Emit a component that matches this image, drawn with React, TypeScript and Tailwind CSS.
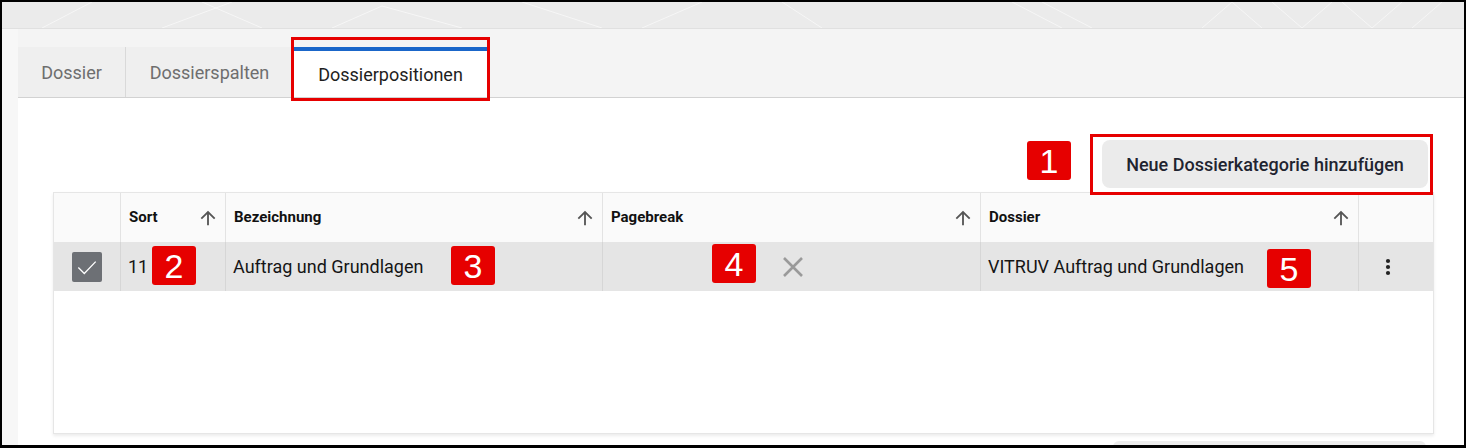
import React from "react";

const Label = ({ n, className }: { n: string; className: string }) => (
  <div
    className={`absolute z-10 flex h-[39px] w-[44px] items-center justify-center rounded-[3px] bg-[#e60000] font-['Liberation_Sans',Arial,sans-serif] text-[34px] leading-none text-white ${className}`}
  >
    {n}
  </div>
);

const ArrowUp = () => (
  <svg width="22" height="22" viewBox="0 0 24 24" className="shrink-0">
    <path
      d="M4 12l1.41 1.41L11 7.83V20h2V7.83l5.58 5.59L20 12l-8-8-8 8z"
      fill="#555555"
    />
  </svg>
);

const HeaderCell = ({ title, border = true }: { title?: string; border?: boolean }) => (
  <div
    className={`flex h-full items-center justify-between pl-[8px] pr-[6px] ${border ? "border-l border-[#e3e3e3]" : ""}`}
  >
    {title ? (
      <>
        <span className="text-[15px] font-bold text-[#111]">{title}</span>
        <ArrowUp />
      </>
    ) : null}
  </div>
);

export default function App() {
  return (
    <div className="flex h-[448px] w-[1466px] flex-col overflow-hidden border-2 border-b-[3px] border-black bg-white font-['Roboto',sans-serif]">
      {/* top band */}
      <div className="relative h-[27px] shrink-0 overflow-hidden border-b border-[#e0e0e0] bg-[#ebebeb]">
        <svg width="1462" height="26" className="absolute left-0 top-0" fill="none">
          <g stroke="#ffffff" strokeOpacity="0.55" strokeWidth="1">
            <path d="M40 26 L90 0 M160 26 L230 0 M200 0 L260 26 M330 26 L380 4 L460 26" />
            <path d="M520 0 L600 26 M640 26 L700 0 M780 0 L820 26" />
            <path d="M1010 0 L1060 26 M1040 0 L1090 26 M1200 26 L1230 0 L1260 26 M1270 0 L1300 26" />
            <path d="M1300 26 L1330 0 M1340 0 L1370 26 L1400 0 M1410 26 L1440 0" />
          </g>
        </svg>
      </div>

      <div className="flex min-h-0 flex-1">
        {/* left strip */}
        <div className="w-[16px] shrink-0 bg-[#f7f7f7]" />

        {/* panel */}
        <div className="flex min-w-0 flex-1 flex-col">
          {/* tab header */}
          <div className="shrink-0 border-b border-[#d2d2d2] bg-[#f4f4f4] pt-[18px]">
            <div className="flex h-[50px] text-[18px]">
              <div className="flex w-[107px] items-center justify-center bg-[#efefef] text-[#6e6e6e]">Dossier</div>
              <div className="flex w-[168px] items-center justify-center border-l border-[#d9d9d9] bg-[#efefef] text-[#6e6e6e]">
                Dossierspalten
              </div>
              <div className="relative ml-[1px] flex w-[193px] items-center justify-center border-t-4 border-[#1a66c9] bg-white text-[#1e1e1e]">
                Dossierpositionen
                <div className="pointer-events-none absolute -left-[3px] -right-[3px] -top-[14px] -bottom-[4px] border-[3px] border-[#e60000]" />
              </div>
            </div>
          </div>

          {/* content */}
          <div className="flex flex-1 flex-col bg-white pl-[35px] pt-[36px]">
            <div className="flex w-[1381px] items-start justify-end">
              <div className="relative mr-[19px] mt-[7px] h-[39px] w-[44px]">
                <Label n="1" className="left-0 top-0" />
              </div>
              <div className="relative z-10 mr-[1px] border-[3px] border-[#e60000] pb-[4px] pl-[9px] pr-[2px] pt-[3px]">
                <button className="flex h-[48px] w-[326px] items-center justify-center rounded-[8px] bg-[#ebebeb] text-[18px] font-medium text-[#1f2430]">
                  Neue Dossierkategorie hinzufügen
                </button>
              </div>
            </div>

            {/* table */}
            <div className="mt-[-3px] h-[242px] w-[1381px] border border-[#e6e6e6] shadow-[0_2px_3px_rgba(0,0,0,0.08)]">
              <div className="grid h-[49px] grid-cols-[66px_105px_377px_378px_378px_75px] bg-[#fafafa]">
                <HeaderCell border={false} />
                <HeaderCell title="Sort" />
                <HeaderCell title="Bezeichnung" />
                <HeaderCell title="Pagebreak" />
                <HeaderCell title="Dossier" />
                <HeaderCell />
              </div>
              <div className="grid h-[49px] grid-cols-[66px_105px_377px_378px_378px_75px] bg-[#e5e5e5] text-[18px] text-[#151515]">
                <div className="flex items-center justify-center">
                  <div className="flex h-[30px] w-[30px] items-center justify-center rounded-[2px] bg-[#6d7075]">
                    <svg width="26" height="26" viewBox="0 0 24 24" fill="none">
                      <path d="M4 12.5l5.5 5.5L20 7" stroke="#ffffff" strokeWidth="1.2" />
                    </svg>
                  </div>
                </div>
                <div className="relative flex items-center border-l border-[#d6d6d6] pl-[7px]">
                  11
                  <Label n="2" className="left-[31px] top-[4px]" />
                </div>
                <div className="relative flex items-center border-l border-[#d6d6d6] pl-[7px]">
                  Auftrag und Grundlagen
                  <Label n="3" className="left-[225px] top-[4px]" />
                </div>
                <div className="relative flex items-center justify-center border-l border-[#d6d6d6]">
                  <svg width="22" height="22" viewBox="0 0 22 22" className="ml-[2px]">
                    <path d="M2 2 L20 20 M20 2 L2 20" stroke="#9a9a9a" strokeWidth="2.6" />
                  </svg>
                  <Label n="4" className="left-[109px] top-[2px]" />
                </div>
                <div className="relative flex items-center border-l border-[#d6d6d6] pl-[7px]">
                  VITRUV Auftrag und Grundlagen
                  <Label n="5" className="left-[286px] top-[7px]" />
                </div>
                <div className="flex items-center border-l border-[#d6d6d6] pl-[26px]">
                  <svg width="6" height="18" viewBox="0 0 6 18">
                    <circle cx="3" cy="3" r="2.1" fill="#222" />
                    <circle cx="3" cy="9" r="2.1" fill="#222" />
                    <circle cx="3" cy="15" r="2.1" fill="#222" />
                  </svg>
                </div>
              </div>
            </div>

            <div className="mt-[7px] flex w-[1381px] justify-end">
              <div className="mr-[8px] h-[6px] w-[313px] rounded-t-[6px] bg-[#ececec]" />
            </div>
          </div>
        </div>
      </div>
    </div>
  );
}
